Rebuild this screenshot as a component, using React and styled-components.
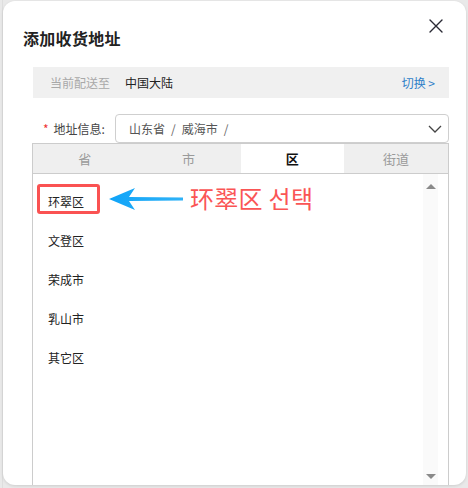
import React, { useState } from 'react';
import styled, { createGlobalStyle } from 'styled-components';

const GlobalStyle = createGlobalStyle`
  html, body {
    margin: 0;
    padding: 0;
    background: #e4e4e4;
    font-family: "Noto Sans CJK SC", "Noto Sans", sans-serif;
  }
  #root {
    width: 468px;
    height: 488px;
    overflow: hidden;
  }
`;

const Backdrop = styled.div`
  width: 468px;
  height: 488px;
  padding: 1px 2px 3px 3px;
  box-sizing: border-box;
  background: linear-gradient(to right, #e9e9e9 0, #e9e9e9 2px, #dedede 2px, #dedede 3px, #e9e9e9 3px);
`;

const Dialog = styled.div`
  height: 100%;
  background: #fff;
  border-radius: 12px;
  box-shadow: 0 1px 3px rgba(0, 0, 0, 0.12);
  display: flex;
  flex-direction: column;
  overflow: hidden;
`;

const Header = styled.div`
  display: flex;
  justify-content: space-between;
  align-items: flex-start;
  padding: 22px 20px 0 20px;
  height: 44px;
`;

const Title = styled.h2`
  margin: 3px 0 0;
  font-size: 16px;
  font-weight: 700;
  color: #222;
  letter-spacing: 0.3px;
`;

const CloseButton = styled.button`
  border: none;
  background: none;
  padding: 0;
  margin: -5px 2px 0 0;
  width: 16px;
  height: 16px;
  cursor: pointer;
  display: flex;
`;

const Body = styled.div`
  flex: 1;
  display: flex;
  flex-direction: column;
  padding: 0 17px 0 29px;
  min-height: 0;
`;

const InfoBar = styled.div`
  display: flex;
  align-items: center;
  height: 31px;
  background: #f0f0f0;
  padding: 0 14px 0 17px;
  margin-left: 1px;
  font-size: 12px;
`;

const Muted = styled.span`
  color: #a8a8a8;
`;

const Region = styled.span`
  color: #222;
  margin-left: 15px;
`;

const Switch = styled.a`
  margin-left: auto;
  color: #2f7fc8;
  cursor: pointer;
`;

const FieldRow = styled.div`
  display: flex;
  align-items: center;
  margin-top: 16px;
`;

const Label = styled.label`
  width: 83px;
  padding-left: 11px;
  box-sizing: border-box;
  font-size: 12px;
  color: #444;
  display: flex;
  align-items: center;
  gap: 5px;
`;

const Star = styled.span`
  color: #e33;
  font-size: 12px;
`;

const Select = styled.div`
  flex: 1;
  height: 29px;
  border: 1px solid #cfcfcf;
  border-radius: 4px;
  display: flex;
  align-items: center;
  padding: 0 5px 0 13px;
  font-size: 12px;
  color: #555;
  box-sizing: border-box;
`;

const Sep = styled.span`
  margin: 0 6px;
  color: #666;
`;

const Chevron = styled.span`
  margin-left: auto;
  display: flex;
`;

const Panel = styled.div`
  flex: 1;
  display: flex;
  flex-direction: column;
  border: 1px solid #cccccc;
  border-bottom: none;
  margin-top: 0;
  min-height: 0;
`;

const Tabs = styled.div`
  display: grid;
  grid-template-columns: repeat(4, 1fr);
  height: 29px;
  border-bottom: 1px solid #cccccc;
`;

const Tab = styled.div`
  display: flex;
  align-items: center;
  justify-content: center;
  font-size: 13px;
  background: ${p => (p.$active ? '#fff' : '#efefef')};
  color: ${p => (p.$active ? '#111' : '#9a9a9a')};
  font-weight: ${p => (p.$active ? 700 : 400)};
`;

const ListArea = styled.div`
  flex: 1;
  display: flex;
  position: relative;
  min-height: 0;
`;

const List = styled.ul`
  list-style: none;
  margin: 0;
  padding: 14px 0 0 15px;
  flex: 1;
`;

const Item = styled.li`
  height: 39px;
  font-size: 12px;
  color: #222;
  display: flex;
  align-items: flex-start;
  padding-top: 5px;
  box-sizing: border-box;
`;

const Scrollbar = styled.div`
  width: 15px;
  margin-right: 10px;
  background: #fafafa;
  display: flex;
  flex-direction: column;
  justify-content: space-between;
  align-items: center;
  padding: 10px 0 6px;
`;

const Triangle = styled.div`
  width: 0;
  height: 0;
  border-left: 5px solid transparent;
  border-right: 5px solid transparent;
  ${p => (p.$up ? 'border-bottom: 5px solid #8a8a8a;' : 'border-top: 5px solid #8a8a8a;')}
`;

const Annotation = styled.div`
  position: absolute;
  top: 10px;
  left: 4px;
  display: flex;
  align-items: center;
  pointer-events: none;
`;

const HighlightBox = styled.div`
  width: 63px;
  height: 30px;
  border: 3px solid #fa5252;
  border-radius: 3px;
  box-sizing: border-box;
`;

const ArrowWrap = styled.div`
  margin-left: 8px;
  display: flex;
`;

const Callout = styled.span`
  font-size: 24px;
  line-height: 1;
  color: #fa5555;
  margin-left: 6px;
  margin-top: -2px;
  letter-spacing: 0.3px;
  font-family: "Noto Sans CJK SC", "Noto Sans CJK KR", sans-serif;
`;

const CloseIcon = () => (
  <svg width="16" height="16" viewBox="0 0 16 16">
    <path d="M2 2L14 14M14 2L2 14" stroke="#2a2a35" strokeWidth="1.4" strokeLinecap="round" />
  </svg>
);

const ChevronIcon = () => (
  <svg width="16" height="16" viewBox="0 0 16 16">
    <path d="M2 5L8 11L14 5" stroke="#444" strokeWidth="1.3" fill="none" />
  </svg>
);

const BlueArrow = () => (
  <svg width="76" height="26" viewBox="0 0 76 26">
    <defs>
      <linearGradient id="shaft" x1="0" x2="1" y1="0" y2="0">
        <stop offset="0" stopColor="#10a4f8" />
        <stop offset="1" stopColor="#2fb2f7" />
      </linearGradient>
    </defs>
    <path d="M1 13 L27 2 L21 11 L75 11.4 L75 14.6 L21 15 L27 24 Z" fill="url(#shaft)" />
  </svg>
);

const districts = ['环翠区', '文登区', '荣成市', '乳山市', '其它区'];
const tabs = ['省', '市', '区', '街道'];

export default function App() {
  const [active, setActive] = useState(2);

  return (
    <>
      <GlobalStyle />
      <Backdrop>
        <Dialog>
          <Header>
            <Title>添加收货地址</Title>
            <CloseButton aria-label="关闭">
              <CloseIcon />
            </CloseButton>
          </Header>
          <Body>
            <InfoBar>
              <Muted>当前配送至</Muted>
              <Region>中国大陆</Region>
              <Switch>切换 &gt;</Switch>
            </InfoBar>
            <FieldRow>
              <Label>
                <Star>*</Star>地址信息:
              </Label>
              <Select>
                山东省<Sep>/</Sep>威海市<Sep>/</Sep>
                <Chevron>
                  <ChevronIcon />
                </Chevron>
              </Select>
            </FieldRow>
            <Panel>
              <Tabs>
                {tabs.map((t, i) => (
                  <Tab key={t} $active={i === active} onClick={() => setActive(i)}>
                    {t}
                  </Tab>
                ))}
              </Tabs>
              <ListArea>
                <List>
                  {districts.map(d => (
                    <Item key={d}>{d}</Item>
                  ))}
                </List>
                <Scrollbar>
                  <Triangle $up />
                  <Triangle />
                </Scrollbar>
                <Annotation>
                  <HighlightBox />
                  <ArrowWrap>
                    <BlueArrow />
                  </ArrowWrap>
                  <Callout>环翠区 선택</Callout>
                </Annotation>
              </ListArea>
            </Panel>
          </Body>
        </Dialog>
      </Backdrop>
    </>
  );
}
